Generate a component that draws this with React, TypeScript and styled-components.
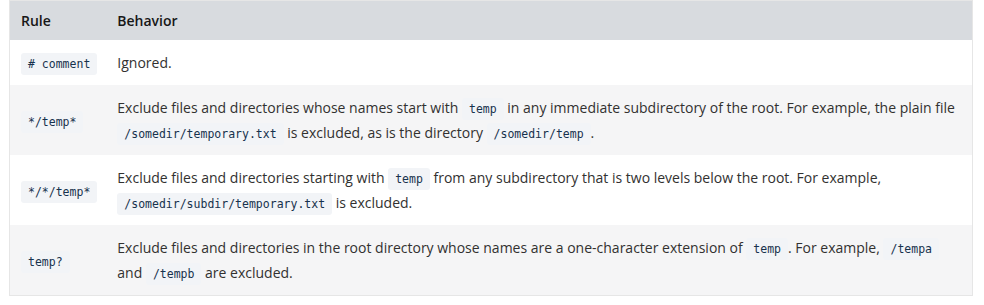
import React from "react";
import styled, { createGlobalStyle } from "styled-components";

const GlobalStyle = createGlobalStyle`
  body {
    margin: 0;
    background: #ffffff;
    font-family: "Open Sans", "Noto Sans", sans-serif;
  }
`;

const Wrapper = styled.div`
  padding: 0 11px 0 9px;
`;

const Table = styled.table`
  width: 964px;
  border-collapse: collapse;
  border: 1px solid #e6e6e6;
  font-size: 14px;
  line-height: 25px;
  color: #323130;
`;

const Th = styled.th<{ $first?: boolean }>`
  background: #d8dbdf;
  color: #171717;
  font-weight: 600;
  text-align: left;
  height: 39px;
  padding: ${(p) => (p.$first ? "0 8px 0 11px" : "0 12px")};
`;

const Row = styled.tr<{ $striped: boolean }>`
  background: ${(p) => (p.$striped ? "#f5f5f6" : "#ffffff")};
`;

const Td = styled.td<{ $first?: boolean }>`
  padding: ${(p) => (p.$first ? "10px 8px 10px 11px" : "10px 12px")};
  vertical-align: middle;
  white-space: ${(p) => (p.$first ? "nowrap" : "normal")};
`;

const Code = styled.code`
  font-family: "DejaVu Sans Mono", "Liberation Mono", monospace;
  font-size: 11.5px;
  line-height: 1;
  color: #17324d;
  background: #f2f4f7;
  padding: 4px 7px;
  border-radius: 3px;
`;

const getRows = (): { rule: string; behavior: React.ReactNode }[] => [
  { rule: "# comment", behavior: "Ignored." },
  {
    rule: "*/temp*",
    behavior: (
      <>
        Exclude files and directories whose names start with <Code>temp</Code> in any
        immediate subdirectory of the root. For example, the plain file{" "}
        <Code>/somedir/temporary.txt</Code> is excluded, as is the directory{" "}
        <Code>/somedir/temp</Code>.
      </>
    ),
  },
  {
    rule: "*/*/temp*",
    behavior: (
      <>
        Exclude files and directories starting with <Code>temp</Code> from any
        subdirectory that is two levels below the root. For example,{" "}
        <Code>/somedir/subdir/temporary.txt</Code> is excluded.
      </>
    ),
  },
  {
    rule: "temp?",
    behavior: (
      <>
        Exclude files and directories in the root directory whose names are a
        one-character extension of <Code>temp</Code>. For example, <Code>/tempa</Code>{" "}
        and <Code>/tempb</Code> are excluded.
      </>
    ),
  },
];

export default function App() {
  const rows = getRows();
  return (
    <>
      <GlobalStyle />
      <Wrapper>
        <Table>
          <thead>
            <tr>
              <Th $first>Rule</Th>
              <Th>Behavior</Th>
            </tr>
          </thead>
          <tbody>
            {rows.map((r, i) => (
              <Row key={i} $striped={i % 2 === 1}>
                <Td $first>
                  <Code>{r.rule}</Code>
                </Td>
                <Td>{r.behavior}</Td>
              </Row>
            ))}
          </tbody>
        </Table>
      </Wrapper>
    </>
  );
}
